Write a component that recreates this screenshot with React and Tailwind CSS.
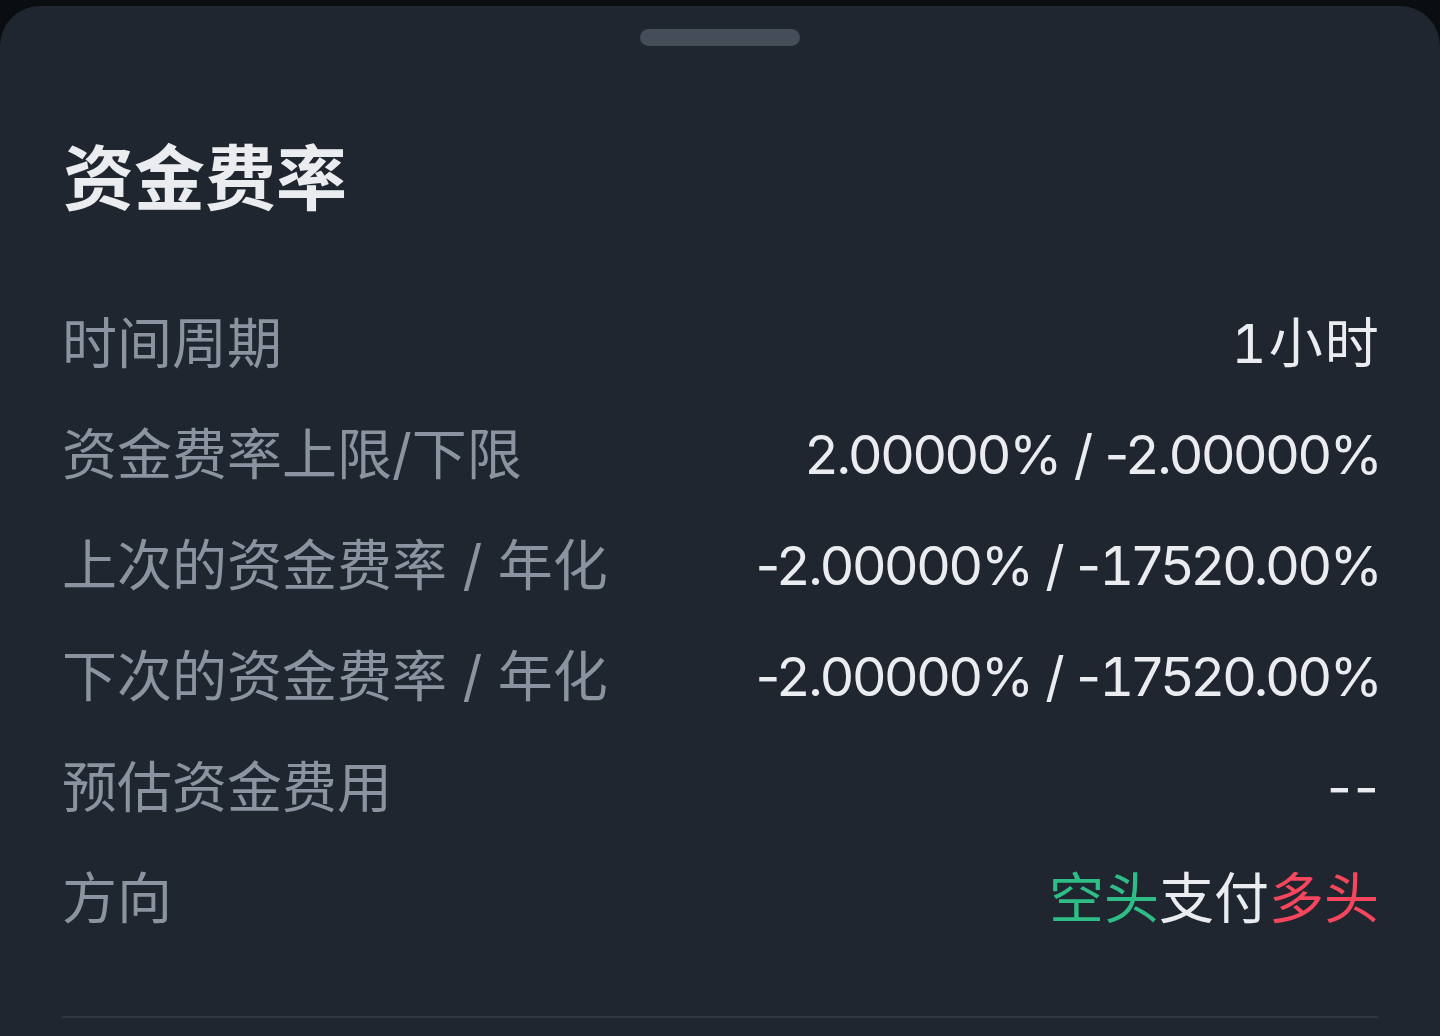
import React from "react";

const rows = [
  { label: "时间周期", value: "1小时", numeric: false },
  { label: "资金费率上限/下限", value: "2.00000% / -2.00000%", numeric: true },
  { label: "上次的资金费率 / 年化", value: "-2.00000% / -17520.00%", numeric: true },
  { label: "下次的资金费率 / 年化", value: "-2.00000% / -17520.00%", numeric: true },
  { label: "预估资金费用", value: "--", numeric: false },
];

// Digit "1" uses the tabular glyph so figures keep an even rhythm.
function Figures({ text }) {
  const parts = text.split("1");
  return parts.map((p, i) => (
    <React.Fragment key={i}>
      {p}
      {i < parts.length - 1 && <span className="tabular-nums">1</span>}
    </React.Fragment>
  ));
}

export default function App() {
  return (
    <div
      className="w-[1440px] h-[1036px] bg-[#0b0e11] overflow-hidden pt-[6px]"
      style={{ fontFamily: '"Inter", "Noto Sans CJK SC", sans-serif' }}
    >
      <div className="h-[1100px] bg-[#1f2630] rounded-t-[40px] flex flex-col">
        {/* drag handle */}
        <div className="flex justify-center pt-[23px]">
          <div className="w-[160px] h-[17px] rounded-full bg-[#454d59]" />
        </div>

        <h1 className="mt-[92px] px-[63px] text-[71px] leading-[80px] font-bold text-[#eaecef]">
          资金费率
        </h1>

        <div className="mt-[70px] pl-[62px] pr-[61px] flex flex-col">
          {rows.map((r) => (
            <div key={r.label} className="h-[111px] flex items-center justify-between">
              <span className="text-[55px] text-[#8a939f]">{r.label}</span>
              {r.numeric ? (
                <span className="text-[54px] text-[#eaecef] tracking-[-0.035em] mr-[-2px]">
                  <Figures text={r.value} />
                </span>
              ) : (
                <span className="text-[54px] text-[#eaecef] tracking-[0.04em] mr-[-2px]">
                  <Figures text={r.value} />
                </span>
              )}
            </div>
          ))}
          <div className="h-[111px] flex items-center justify-between">
            <span className="text-[55px] text-[#8a939f]">方向</span>
            <span className="text-[55px]">
              <span className="text-[#2ebd85]">空头</span>
              <span className="text-[#eaecef]">支付</span>
              <span className="text-[#f6465d]">多头</span>
            </span>
          </div>
        </div>

        <div className="mt-[62px] mx-[62px] h-[2px] bg-[#2f3742]" />
      </div>
    </div>
  );
}
